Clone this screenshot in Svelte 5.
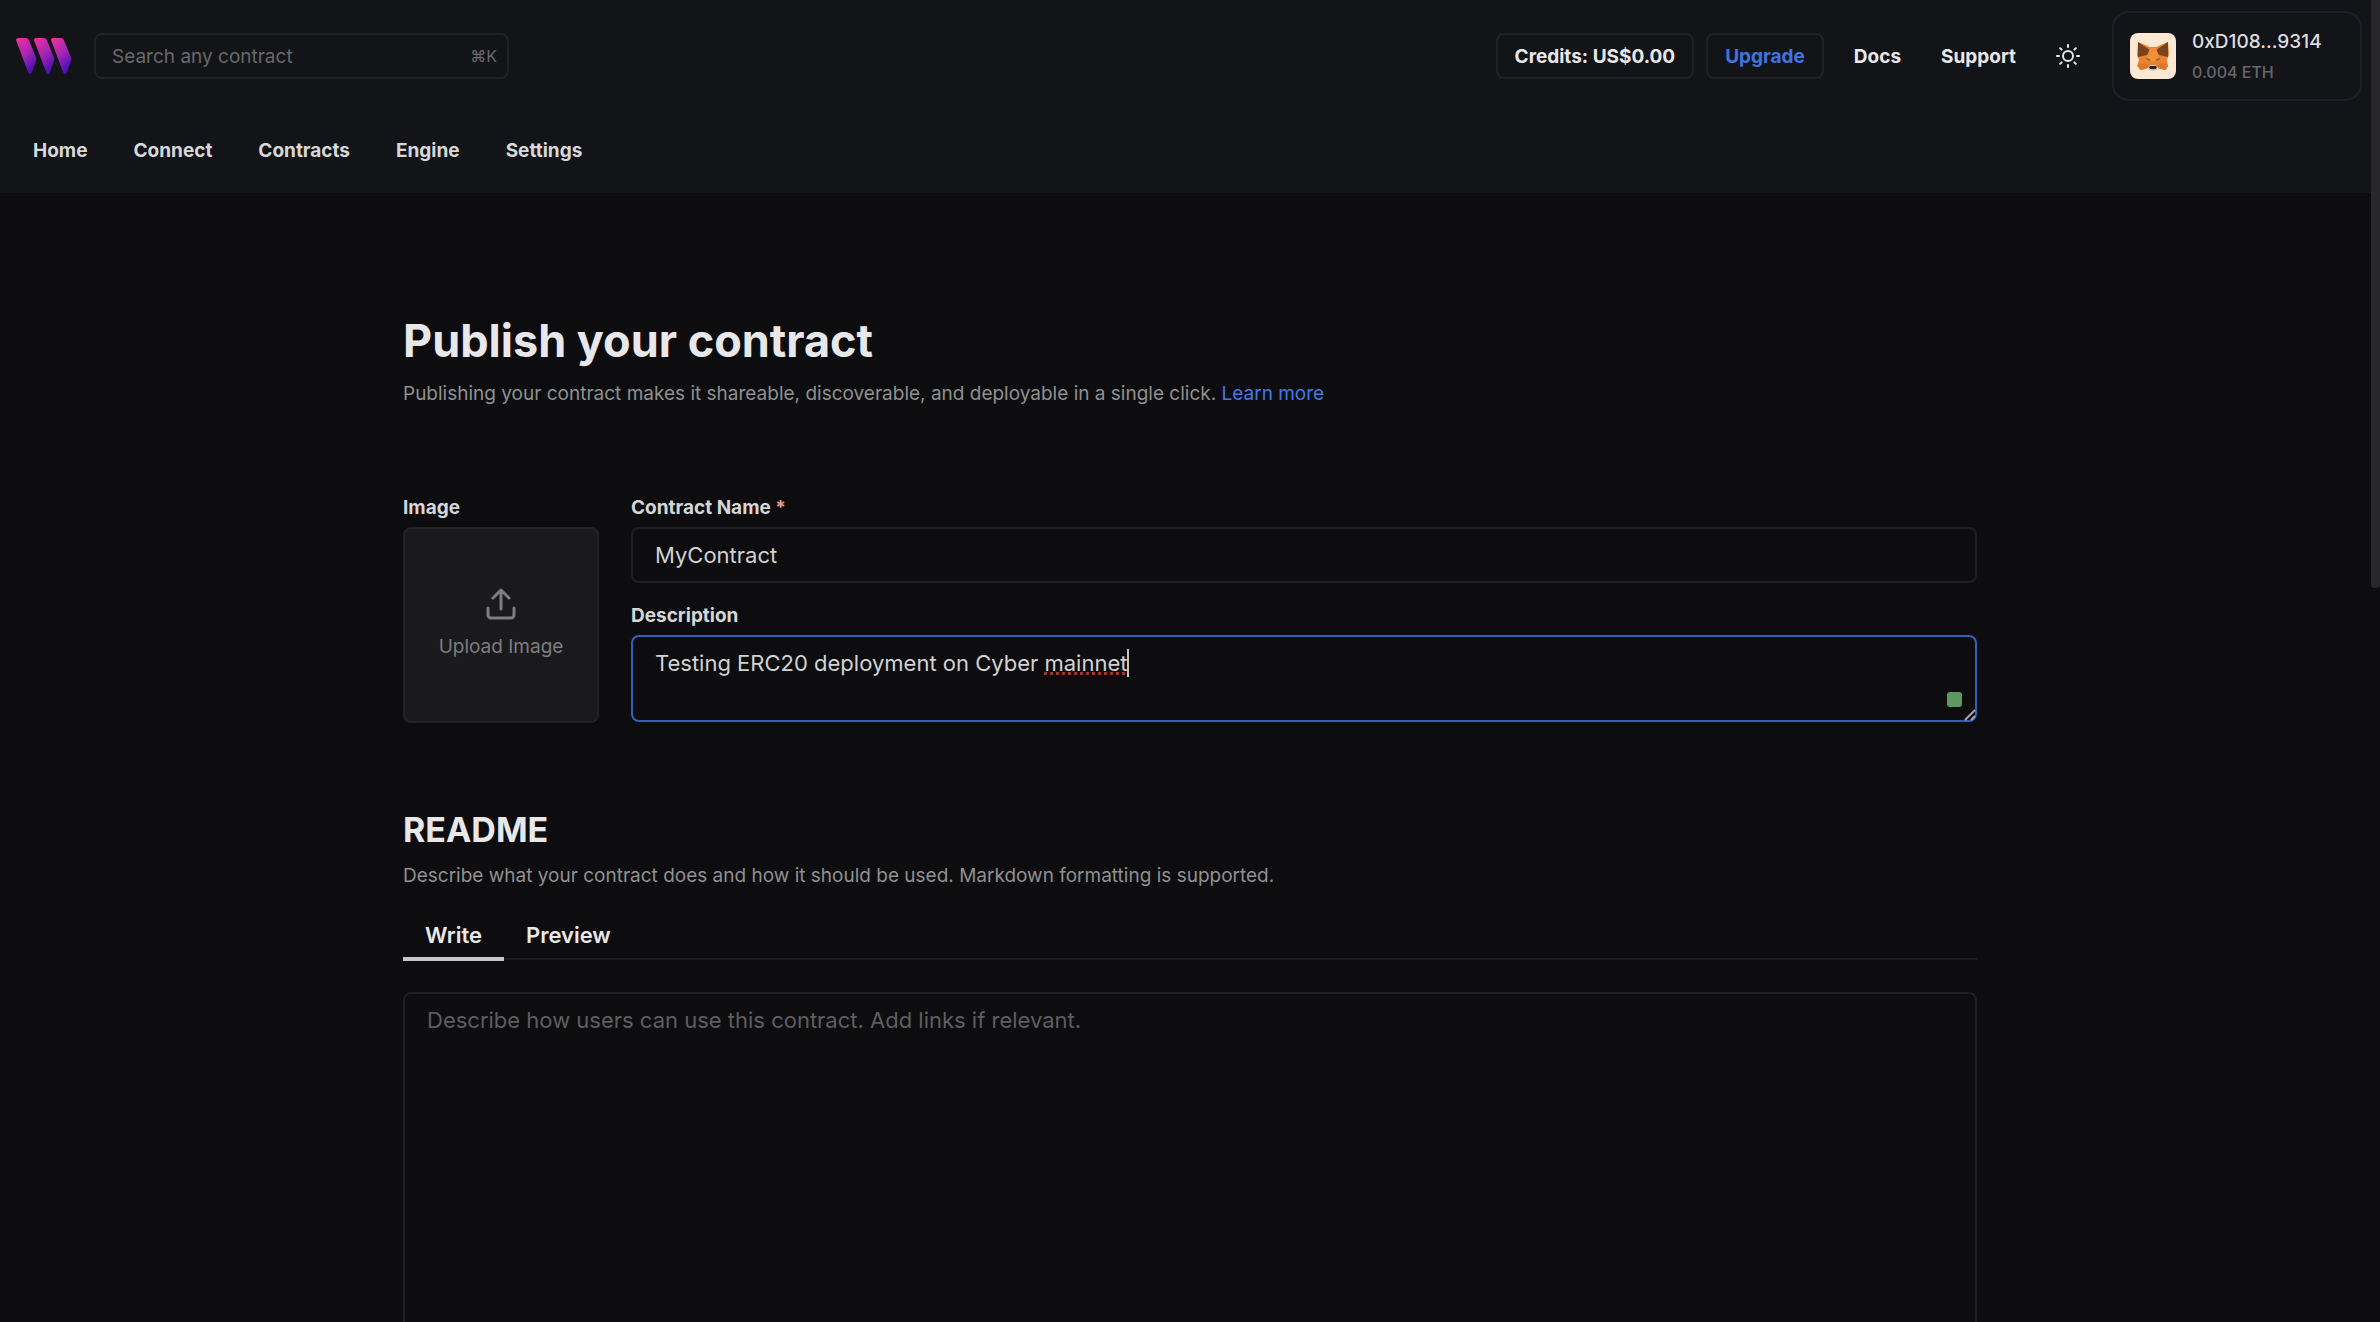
<script lang="ts">
  const navItems = ['Home', 'Connect', 'Contracts', 'Engine', 'Settings']
  const tabs = ['Write', 'Preview']

  let activeTab = $state('Write')
  let focusedField = $state('description')
  let search = $state('')
  let contractName = $state('MyContract')
  let description = $state('Testing ERC20 deployment on Cyber mainnet')
  let readme = $state('')

  let splitAt = $derived(description.lastIndexOf(' ') + 1)
</script>

<div class="page">
  <header>
    <div class="top-bar">
      <a class="logo" href="/" aria-label="Home page">
        <svg width="57" height="36" viewBox="0 0 57 36">
          <defs>
            <linearGradient id="logo-fill" x1="0" y1="0" x2="0.5" y2="1">
              <stop offset="0" stop-color="#f0329f" />
              <stop offset="0.55" stop-color="#a626b4" />
              <stop offset="1" stop-color="#5110b4" />
            </linearGradient>
          </defs>
          {#each [0, 18, 35] as x}
            <path
              transform="translate({x} 0)"
              fill="url(#logo-fill)"
              d="M2 0H10Q12 0 12.800 2L20 19.500Q20.600 21 20 22.500L16.300 33.500Q15.300 36 14 36Q12.700 36 11.800 33.500L.3 2.800Q-.5 0 2 0Z"
            />
          {/each}
        </svg>
      </a>

      <label class="search">
        <input type="text" placeholder="Search any contract" aria-label="Search any contract" bind:value={search} />
        <kbd>⌘K</kbd>
      </label>

      <div class="actions">
        <button class="outlined">Credits: US$0.00</button>
        <button class="outlined upgrade">Upgrade</button>
        <a class="link docs" href="/docs">Docs</a>
        <a class="link" href="/support">Support</a>
        <button class="theme" aria-label="Toggle theme">
          <svg width="24" height="24" viewBox="0 0 24 24" fill="none" stroke="currentColor" stroke-width="2" stroke-linecap="round">
            <circle cx="12" cy="12" r="5" />
            <path d="M12 1v2M12 21v2M1 12h2M21 12h2M4.200 4.200l1.400 1.400M18.400 18.400l1.400 1.400M4.200 19.800l1.400-1.400M18.400 5.600l1.400-1.400" />
          </svg>
        </button>
        <button class="wallet">
          <svg width="46" height="46" viewBox="0 0 46 46">
            <rect width="46" height="46" rx="8" fill="#fde8d3" />
            <path fill="#e8822e" d="M8 9l12 5h6l12-5 1 13-2 5 1 6-3 4-8-2-3 2h-3l-3-2-7 2-4-4 2-6-2-5z" />
            <path fill="#7a431f" d="M8 9l12 8-3 5-9 2zM38 9l-12 8 3 5 9 2z" />
            <path fill="#f09038" d="M20 15h6l3 9-6 6-6-6z" />
            <path fill="#d9772c" d="M8 32l7-2 5 4-5 2-5 1zM38 32l-7-2-5 4 5 2 5 1z" />
            <path fill="#a0643a" d="M16 25l4 1v2l-3-1zM30 25l-4 1v2l3-1z" />
            <path fill="#d5c4b5" d="M18 34l3-2h4l3 2-1 3-3 1h-2l-3-1z" />
            <path fill="#20242a" d="M20 33h6l1 2-2 1h-4l-2-1z" />
          </svg>
          <span class="wallet-text">
            <span class="address">0xD108...9314</span>
            <span class="balance">0.004 ETH</span>
          </span>
        </button>
      </div>
    </div>

    <nav>
      {#each navItems as item}
        <a href="/{item.toLowerCase()}">{item}</a>
      {/each}
    </nav>
  </header>

  <main>
    <h1>Publish your contract</h1>
    <p class="intro">
      Publishing your contract makes it shareable, discoverable, and deployable in a single click.
      <a href="/learn">Learn more</a>
    </p>

    <div class="details">
      <div class="image-field">
        <span class="label" id="image-label">Image</span>
        <button class="upload" aria-describedby="image-label">
          <svg width="30" height="32" viewBox="0 0 30 32" fill="none" stroke="currentColor" stroke-width="3" stroke-linecap="round" stroke-linejoin="round">
            <path d="M15 21V2M7 10l8-8 8 8M2 20v7a3 3 0 0 0 3 3h20a3 3 0 0 0 3-3v-7" />
          </svg>
          Upload Image
        </button>
      </div>

      <div class="text-fields">
        <label class="label" for="name">Contract Name <span class="required">*</span></label>
        <input id="name" class="box" type="text" bind:value={contractName} onfocus={() => (focusedField = 'name')} />

        <label class="label second" for="description">Description</label>
        <div class="description">
          <textarea
            id="description"
            class="box"
            class:focused={focusedField === 'description'}
            spellcheck="false"
            bind:value={description}
            onfocus={() => (focusedField = 'description')}
          ></textarea>
          <div class="marks" aria-hidden="true">
            {description.slice(0, splitAt)}<span class="misspelled">{description.slice(splitAt)}</span>{#if focusedField === 'description'}<i class="caret"></i>{/if}
          </div>
          <span class="status"></span>
          <svg class="grip" width="12" height="12" viewBox="0 0 12 12" stroke="#a5a5a7" stroke-width="2">
            <path d="M1 11L11 1M7 11l4-4" />
          </svg>
        </div>
      </div>
    </div>

    <h2>README</h2>
    <p class="intro">Describe what your contract does and how it should be used. Markdown formatting is supported.</p>

    <div class="tabs" role="tablist">
      {#each tabs as tab}
        <button role="tab" class:active={activeTab === tab} aria-selected={activeTab === tab} onclick={() => (activeTab = tab)}>
          {tab}
        </button>
      {/each}
    </div>

    <textarea
      class="box readme"
      aria-label="README"
      placeholder="Describe how users can use this contract. Add links if relevant."
      bind:value={readme}
    ></textarea>
  </main>

  <div class="scrollbar"></div>
</div>

<style>
  :global(body) {
    background: #0d0d0f;
  }

  .page {
    height: 100vh;
    overflow: hidden;
    position: relative;
    background: #0d0d0f;
    color: #e8e8ea;
    font-family: Inter, "Liberation Sans", sans-serif;
    font-size: 19px;
    line-height: 30px;
  }

  .page * {
    box-sizing: border-box;
  }

  a {
    color: inherit;
    text-decoration: none;
  }

  button,
  input,
  textarea {
    font: inherit;
    color: inherit;
    background: none;
    border: none;
    outline: none;
    margin: 0;
    padding: 0;
  }

  button {
    cursor: pointer;
  }

  header {
    background: #131418;
    padding: 11px 18px 0 16px;
    height: 193px;
  }

  .top-bar {
    display: flex;
    align-items: center;
    height: 90px;
  }

  .logo {
    display: flex;
    margin-right: 21px;
  }

  .search {
    display: flex;
    align-items: center;
    width: 415px;
    height: 46px;
    padding: 0 10px 0 16px;
    border: 2px solid #202124;
    border-radius: 8px;
  }

  .search input {
    flex: 1;
    min-width: 0;
    padding-top: 2px;
  }

  .search input::placeholder {
    color: #68696c;
    opacity: 1;
  }

  kbd {
    font-family: inherit;
    font-size: 16px;
    color: #68696c;
  }

  .actions {
    display: flex;
    align-items: center;
    margin-left: auto;
    font-weight: 700;
  }

  .outlined {
    height: 46px;
    padding: 2px 17px 0;
    margin-right: 12px;
    border: 2px solid #202125;
    border-radius: 8px;
  }

  .upgrade {
    color: #3f74e0;
  }

  .link {
    margin-right: 40px;
    padding-top: 2px;
  }

  .docs {
    margin-left: 18px;
  }

  .theme {
    display: flex;
    margin-right: 32px;
  }

  .wallet {
    display: flex;
    align-items: center;
    gap: 16px;
    width: 250px;
    height: 90px;
    padding: 0 16px;
    border: 2px solid #1f2026;
    border-radius: 17px;
    font-weight: 500;
    line-height: 28px;
    text-align: left;
  }

  .wallet-text {
    display: flex;
    flex-direction: column;
    gap: 2px;
    padding-top: 2px;
  }

  .address {
    color: #dcdce0;
  }

  .balance {
    color: #66666d;
    font-size: 16px;
  }

  nav {
    display: flex;
    gap: 46px;
    padding: 35px 17px 0;
    font-weight: 700;
    color: #d8d8d9;
  }

  main {
    width: 1574px;
    max-width: 100%;
    margin: 0 auto;
    padding-top: 116px;
  }

  h1,
  h2,
  p {
    margin: 0;
  }

  h1,
  h2 {
    font-weight: 700;
  }

  h1 {
    font-size: 45px;
    line-height: 64px;
  }

  h2 {
    margin-top: 84px;
    font-size: 34px;
    line-height: 46px;
  }

  .intro {
    margin-top: 6px;
    color: #909092;
  }

  h2 + .intro {
    margin-top: 8px;
  }

  .intro a {
    color: #4479e4;
  }

  .details {
    display: flex;
    gap: 32px;
    margin-top: 84px;
  }

  .label {
    display: block;
    margin-bottom: 4px;
    font-weight: 700;
    color: #d6d6d7;
  }

  .second {
    margin-top: 18px;
  }

  .required {
    color: #e59a92;
  }

  .upload {
    display: flex;
    flex-direction: column;
    align-items: center;
    justify-content: center;
    gap: 12px;
    width: 196px;
    height: 196px;
    border: 2px solid #222326;
    border-radius: 8px;
    background: #1a1a1c;
    color: #7d7d80;
  }

  .text-fields {
    flex: 1;
  }

  .box {
    display: block;
    width: 100%;
    padding: 12px 22px;
    border: 2px solid #1e1f21;
    border-radius: 8px;
    font-size: 22px;
    line-height: 28px;
    color: #d2d2d3;
    resize: none;
  }

  .box.focused {
    border-color: #3160bd;
    caret-color: transparent;
  }

  .description {
    position: relative;
  }

  .description .box {
    height: 87px;
  }

  .marks {
    position: absolute;
    inset: 0;
    padding: 14px 24px;
    font-size: 22px;
    line-height: 28px;
    color: transparent;
    pointer-events: none;
  }

  .misspelled {
    text-decoration: underline dotted #a03530 3px;
    text-decoration-skip-ink: none;
    text-underline-offset: 1px;
  }

  .caret {
    display: inline-block;
    width: 2px;
    height: 28px;
    vertical-align: top;
    background: #c4c4c5;
  }

  .status {
    position: absolute;
    right: 15px;
    bottom: 15px;
    width: 15px;
    height: 15px;
    border-radius: 3px;
    background: #5d985f;
  }

  .grip {
    position: absolute;
    right: 1px;
    bottom: 1px;
  }

  .tabs {
    display: flex;
    margin-top: 20px;
    border-bottom: 2px solid #1c1c1e;
  }

  .tabs button {
    margin-bottom: -3px;
    padding: 10px 22px 8px;
    border-bottom: 4px solid transparent;
    font-size: 22px;
    font-weight: 600;
    line-height: 28px;
  }

  .tabs .active {
    border-bottom-color: #c6c6ca;
  }

  .readme {
    height: 560px;
    margin-top: 32px;
  }

  .readme::placeholder {
    color: #5e5e60;
    opacity: 1;
  }

  .scrollbar {
    position: absolute;
    top: 0;
    right: 0;
    width: 9px;
    height: 588px;
    border-radius: 0 0 4px 4px;
    background: #28282a;
  }
</style>
